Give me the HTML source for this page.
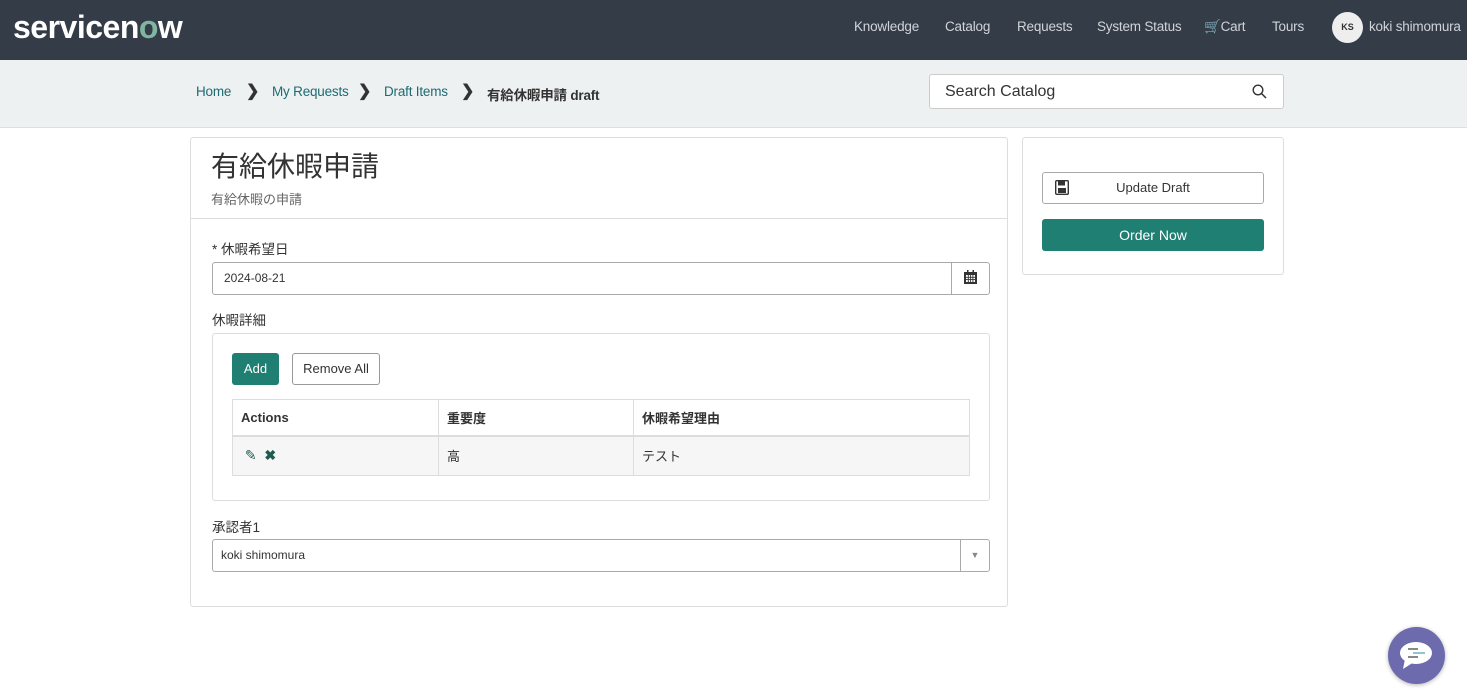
<!DOCTYPE html>
<html><head><meta charset="utf-8"><style>
*{box-sizing:border-box;margin:0;padding:0}
body{width:1467px;height:693px;overflow:hidden;background:#fff;font-family:"Liberation Sans","Noto Sans CJK JP",sans-serif;color:#333;position:relative;font-size:13px}
.nav{position:absolute;left:0;top:0;width:1467px;height:60px;background:#343c47}
.logo{position:absolute;left:13px;top:9px;font-size:32px;font-weight:bold;color:#fff;letter-spacing:-0.5px}
.logo span{color:#81b5a1}
.nl{position:absolute;top:19px;color:#d0d4d9;font-size:13.5px;white-space:nowrap;letter-spacing:-0.2px}
.av{position:absolute;left:1332px;top:12px;width:31px;height:31px;border-radius:50%;background:#eee;color:#333;font-size:9px;font-weight:bold;text-align:center;line-height:31px}
.crumb{position:absolute;left:0;top:60px;width:1467px;height:68px;background:#eef1f2;border-bottom:1px solid #dde}
.bc{position:absolute;top:24px;font-size:13.5px;color:#1d6b72;white-space:nowrap;letter-spacing:-0.2px}
.ch{position:absolute;top:21px;font-size:16px;font-weight:bold;color:#333}
.search{position:absolute;left:929px;top:14px;width:355px;height:35px;background:#fff;border:1px solid #ccc;border-radius:3px;font-size:16px;padding:8px 15px;color:#333}
.card{position:absolute;border:1px solid #ddd;border-radius:3px;background:#fff}
.lbl{position:absolute;font-size:13.5px;color:#333}
.inp{position:absolute;border:1px solid #aaa;border-radius:3px;font-size:12px;padding:8px 11px;background:#fff}
.btn{position:absolute;border-radius:3px;font-size:13px;text-align:center}
td,th{border:1px solid #ddd;text-align:left;padding:0 8px;font-size:13px}
</style></head><body>
<div class="nav">
<div class="logo">servicen<span>o</span>w</div>
<div class="nl" style="left:854px">Knowledge</div>
<div class="nl" style="left:945px">Catalog</div>
<div class="nl" style="left:1017px">Requests</div>
<div class="nl" style="left:1097px">System Status</div>
<div class="nl" style="left:1204px">&#128722;Cart</div>
<div class="nl" style="left:1272px">Tours</div>
<div class="av">KS</div>
<div class="nl" style="left:1369px">koki shimomura</div>
</div>
<div class="crumb">
<div class="bc" style="left:196px">Home</div><div class="ch" style="left:246px">&#x276F;</div>
<div class="bc" style="left:272px">My Requests</div><div class="ch" style="left:358px">&#x276F;</div>
<div class="bc" style="left:384px">Draft Items</div><div class="ch" style="left:461px">&#x276F;</div>
<div class="bc" style="left:487px;color:#333;font-weight:bold">有給休暇申請 draft</div>
<div class="search">Search Catalog
<svg style="position:absolute;right:16px;top:9px" width="15" height="15" viewBox="0 0 15 15"><circle cx="6" cy="6" r="4.8" fill="none" stroke="#333" stroke-width="1.4"/><path d="M9.5 9.5L14 14" stroke="#333" stroke-width="1.5"/></svg></div>
</div>
<div class="card" style="left:190px;top:137px;width:818px;height:470px">
<div style="position:absolute;left:20px;top:7px;font-size:28px;color:#333">有給休暇申請</div>
<div style="position:absolute;left:20px;top:51px;font-size:13px;color:#666">有給休暇の申請</div>
<div style="position:absolute;left:0;top:80px;width:816px;border-top:1px solid #ddd"></div>
<div class="lbl" style="left:21px;top:100px">* 休暇希望日</div>
<div class="inp" style="left:21px;top:124px;width:778px;height:33px">2024-08-21
<div style="position:absolute;right:0;top:0;width:38px;height:31px;border-left:1px solid #aaa;text-align:center;padding-top:7px">
<svg width="13" height="14" viewBox="0 0 13 14"><rect x="0" y="2" width="13" height="12" fill="#333"/><rect x="2" y="5" width="9" height="7" fill="#fff"/><path d="M2 7.3h9M2 9.6h9M4.3 5v7M6.6 5v7M8.9 5v7" stroke="#333" stroke-width="0.9"/><rect x="3" y="0" width="1.5" height="3" fill="#333"/><rect x="8.5" y="0" width="1.5" height="3" fill="#333"/></svg></div></div>
<div class="lbl" style="left:21px;top:171px">休暇詳細</div>
<div class="card" style="left:21px;top:195px;width:778px;height:168px">
<div class="btn" style="left:19px;top:19px;width:47px;height:32px;background:#1e7f72;color:#fff;line-height:32px">Add</div>
<div class="btn" style="left:79px;top:19px;width:88px;height:32px;border:1px solid #999;line-height:30px">Remove All</div>
<table style="position:absolute;left:19px;top:65px;width:738px;border-collapse:collapse">
<tr style="height:36px;border-bottom:2px solid #ddd"><th style="width:206px">Actions</th><th style="width:195px">重要度</th><th>休暇希望理由</th></tr>
<tr style="height:40px;background:#f6f6f6"><td style="color:#1e5c50;font-size:14px">&nbsp;<span>&#x270E;</span> &nbsp;<b>&#x2716;</b></td><td>高</td><td>テスト</td></tr>
</table>
</div>
<div class="lbl" style="left:21px;top:378px">承認者1</div>
<div class="inp" style="left:21px;top:401px;width:778px;height:33px;padding-left:8px">koki shimomura
<div style="position:absolute;right:0;top:0;width:29px;height:31px;border-left:1px solid #aaa;text-align:center;line-height:31px;font-size:9px;color:#888">&#9660;</div></div>
</div>
<div class="card" style="left:1022px;top:137px;width:262px;height:138px">
<div class="btn" style="left:19px;top:34px;width:222px;height:32px;border:1px solid #aaa;line-height:30px;font-size:13px">Update Draft
<svg style="position:absolute;left:12px;top:7px" width="14" height="15" viewBox="0 0 14 15"><rect x="0.7" y="0.7" width="12.6" height="13.6" rx="1" fill="none" stroke="#333" stroke-width="1.4"/><rect x="3" y="1" width="7" height="4.5" fill="#333"/><rect x="3" y="8" width="8" height="5" fill="#333"/></svg></div>
<div class="btn" style="left:19px;top:81px;width:222px;height:32px;background:#1e7f72;color:#fff;line-height:32px;font-size:14px">Order Now</div>
</div>
<div style="position:absolute;left:1388px;top:627px;width:57px;height:57px;border-radius:50%;background:#6d6aad;box-shadow:0 1px 4px rgba(0,0,0,.3)">
<svg width="57" height="57" viewBox="0 0 57 57"><ellipse cx="28" cy="26" rx="16" ry="11" fill="#fff"/><path d="M17 32L15 42L26 35Z" fill="#fff"/><path d="M20 22h10M20 30h10" stroke="#888" stroke-width="2"/><path d="M25 26h12" stroke="#8ec5d0" stroke-width="2"/></svg></div>
</body></html>
